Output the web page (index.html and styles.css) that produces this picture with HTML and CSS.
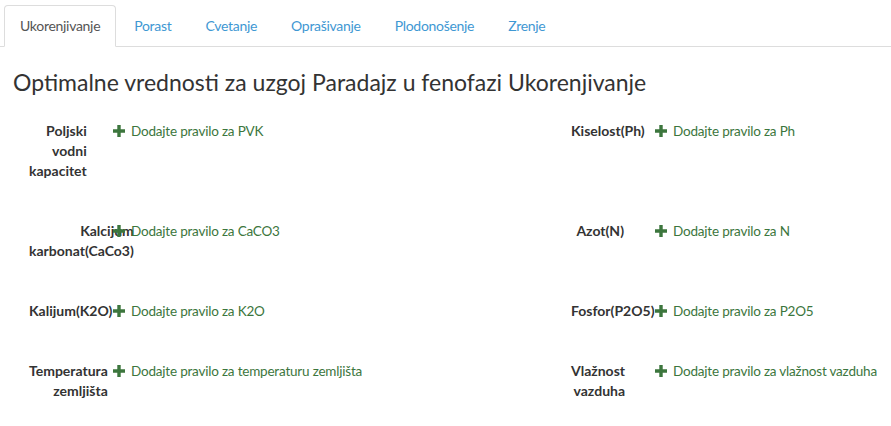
FILE: index.html
```html
<!DOCTYPE html>
<html lang="sr">
<head>
<meta charset="utf-8">
<title>Optimalne vrednosti</title>
<link rel="stylesheet" href="styles.css">
</head>
<body>
<ul class="tabs">
  <li class="tab active"><a>Ukorenjivanje</a></li>
  <li class="tab"><a>Porast</a></li>
  <li class="tab"><a>Cvetanje</a></li>
  <li class="tab"><a>Oprašivanje</a></li>
  <li class="tab"><a>Plodonošenje</a></li>
  <li class="tab"><a>Zrenje</a></li>
</ul>
<h3 class="title">Optimalne vrednosti za uzgoj Paradajz u fenofazi Ukorenjivanje</h3>
<div class="fields">
  <div class="field">
    <div class="label-cell"><label class="label">Poljski vodni kapacitet</label></div>
    <div class="rule"><svg class="plus" viewBox="0 0 12 12"><path d="M4.3 0h3.4v4.3H12v3.4H7.7V12H4.3V7.7H0V4.3h4.3z"/></svg><span>Dodajte pravilo za PVK</span></div>
  </div>
  <div class="field">
    <div class="label-cell"><label class="label">Kiselost(Ph)</label></div>
    <div class="rule"><svg class="plus" viewBox="0 0 12 12"><path d="M4.3 0h3.4v4.3H12v3.4H7.7V12H4.3V7.7H0V4.3h4.3z"/></svg><span>Dodajte pravilo za Ph</span></div>
  </div>
  <div class="field">
    <div class="label-cell"><label class="label">Kalcijum karbonat(CaCo3)</label></div>
    <div class="rule"><svg class="plus" viewBox="0 0 12 12"><path d="M4.3 0h3.4v4.3H12v3.4H7.7V12H4.3V7.7H0V4.3h4.3z"/></svg><span>Dodajte pravilo za CaCO3</span></div>
  </div>
  <div class="field">
    <div class="label-cell"><label class="label">Azot(N)</label></div>
    <div class="rule"><svg class="plus" viewBox="0 0 12 12"><path d="M4.3 0h3.4v4.3H12v3.4H7.7V12H4.3V7.7H0V4.3h4.3z"/></svg><span>Dodajte pravilo za N</span></div>
  </div>
  <div class="field">
    <div class="label-cell"><label class="label">Kalijum(K2O)</label></div>
    <div class="rule"><svg class="plus" viewBox="0 0 12 12"><path d="M4.3 0h3.4v4.3H12v3.4H7.7V12H4.3V7.7H0V4.3h4.3z"/></svg><span>Dodajte pravilo za K2O</span></div>
  </div>
  <div class="field">
    <div class="label-cell"><label class="label">Fosfor(P2O5)</label></div>
    <div class="rule"><svg class="plus" viewBox="0 0 12 12"><path d="M4.3 0h3.4v4.3H12v3.4H7.7V12H4.3V7.7H0V4.3h4.3z"/></svg><span>Dodajte pravilo za P2O5</span></div>
  </div>
  <div class="field">
    <div class="label-cell"><label class="label">Temperatura zemljišta</label></div>
    <div class="rule"><svg class="plus" viewBox="0 0 12 12"><path d="M4.3 0h3.4v4.3H12v3.4H7.7V12H4.3V7.7H0V4.3h4.3z"/></svg><span>Dodajte pravilo za temperaturu zemljišta</span></div>
  </div>
  <div class="field">
    <div class="label-cell"><label class="label">Vlažnost vazduha</label></div>
    <div class="rule"><svg class="plus" viewBox="0 0 12 12"><path d="M4.3 0h3.4v4.3H12v3.4H7.7V12H4.3V7.7H0V4.3h4.3z"/></svg><span>Dodajte pravilo za vlažnost vazduha</span></div>
  </div>
</div>
</body>
</html>
```

FILE: styles.css
```css
html, body {
  margin: 0;
  padding: 0;
  background: #fff;
}
body {
  font-family: "Lato", "Open Sans", sans-serif;
  font-size: 14px;
  line-height: 20px;
  color: #333;
  overflow: hidden;
}
.tabs {
  list-style: none;
  margin: 0;
  padding: 5px 0 0 4px;
  display: flex;
  border-bottom: 1px solid #ddd;
}
.tab {
  margin-right: 2px;
  margin-bottom: -1px;
}
.tab a {
  display: block;
  padding: 10px 15px;
  line-height: 20px;
  letter-spacing: -0.3px;
  border: 1px solid transparent;
  border-radius: 4px 4px 0 0;
  color: #3f98d3;
}
.tab.active a {
  color: #555;
  background: #fff;
  border-color: #ddd #ddd transparent;
}
.title {
  margin: 20px 0 0 13px;
  font-size: 23px;
  font-weight: 400;
  line-height: 30px;
  color: #333;
}
.fields {
  display: grid;
  grid-template-columns: 542px 1fr;
  row-gap: 40px;
  margin: 24px 0 0 14px;
}
.field {
  display: grid;
  grid-template-columns: 83px 1fr;
  align-items: start;
}
.label-cell {
  padding: 0 15px;
}
.label {
  display: block;
  width: fit-content;
  margin-left: auto;
  text-align: right;
  font-weight: 700;
  color: #333;
}
.rule {
  padding-left: 16px;
  display: flex;
  align-items: center;
  font-size: 13.5px;
  letter-spacing: -0.2px;
  color: #3c763d;
  white-space: nowrap;
}
.plus {
  width: 12px;
  height: 12px;
  fill: #3c763d;
  margin-right: 6px;
  flex: none;
}
```
